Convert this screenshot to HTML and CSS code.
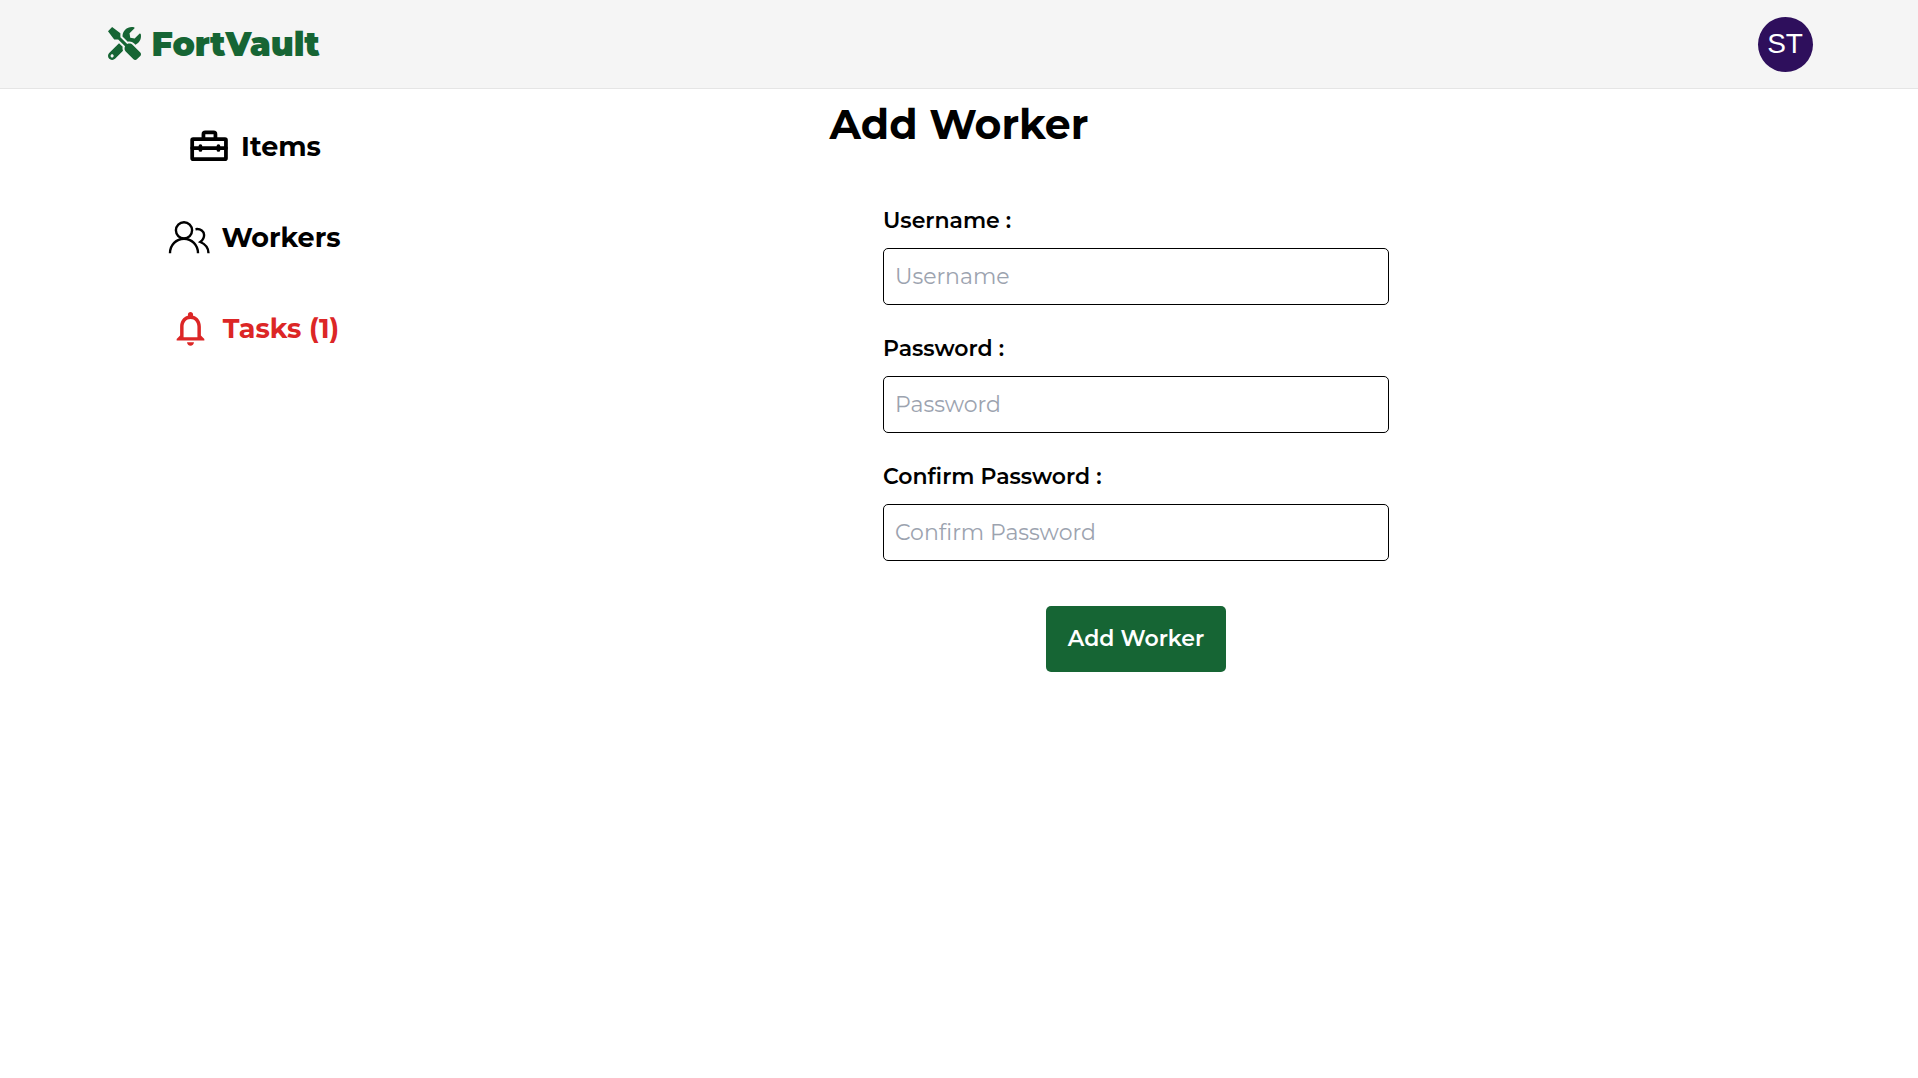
FILE: index.html
```html
<!DOCTYPE html>
<html lang="en">
<head>
<meta charset="utf-8">
<meta name="viewport" content="width=device-width, initial-scale=1">
<title>FortVault</title>
<link rel="stylesheet" href="styles.css">
</head>
<body>
<header class="topbar">
  <a class="brand" href="#">
    <svg class="brand-icon" viewBox="0 0 512 512" aria-hidden="true"><path fill="currentColor" d="M501.100 395.700L384 278.600c-23.100-23.100-57.600-27.600-85.400-13.900L192 158.100V96L64 0 0 64l96 128h62.100l106.600 106.600c-13.600 27.800-9.200 62.300 13.900 85.400l117.100 117.100c14.600 14.600 38.200 14.600 52.700 0l52.700-52.700c14.500-14.600 14.500-38.200 0-52.700zM331.700 225c28.300 0 54.900 11 74.900 31l19.400 19.400c15.800-6.900 30.800-16.500 43.800-29.500 37.100-37.100 49.700-89.300 37.900-136.700-2.200-9-13.500-12.100-20.100-5.500l-74.400 74.400-67.900-11.300L334 98.900l74.400-74.400c6.600-6.600 3.400-17.900-5.700-20.200-47.400-11.700-99.600.900-136.600 37.900-28.500 28.500-41.900 66.100-41.200 103.600l82.100 82.100c8.100-1.900 16.500-2.900 24.700-2.900zm-103.900 82l-56.700-56.700L18.700 402.800c-25 25-25 65.500 0 90.500s65.500 25 90.500 0l123.600-123.600c-7.600-19.900-9.900-41.600-5-62.700zM64 472c-13.200 0-24-10.800-24-24 0-13.300 10.700-24 24-24s24 10.700 24 24c0 13.200-10.700 24-24 24z"/></svg>
    <span>FortVault</span>
  </a>
  <button class="avatar" type="button" aria-label="Account ST">ST</button>
</header>
<div class="page">
  <nav class="sidebar">
    <a class="nav-link" href="#">
      <svg class="nav-icon" viewBox="0 0 24 24" aria-hidden="true" fill="none" stroke="currentColor" stroke-width="2" stroke-linejoin="round" stroke-linecap="round"><rect x="3.300" y="8" width="18" height="10.700" rx=".5"/><path d="M9.300 8V5.500a1 1 0 0 1 1-1h4.400a1 1 0 0 1 1 1V8M3.300 12.800h18" /><path d="M7.700 11.800v2M17.300 11.800v2"/></svg>
      <span>Items</span>
    </a>
    <a class="nav-link" href="#">
      <svg class="nav-icon" viewBox="0 0 45 45" aria-hidden="true" fill="none" stroke="currentColor" stroke-width="2.400"><circle cx="18" cy="15.300" r="8.100"/><path d="M4 38.200a14 14.500 0 0 1 28 0M29.500 14.200c5.200-.8 8.600 2.200 8.600 5.800 0 3-1.300 5.200-3.800 7 4.800 2 8.200 5.700 8.200 11.200"/></svg>
      <span>Workers</span>
    </a>
    <a class="nav-link nav-link-alert" href="#">
      <svg class="nav-icon" viewBox="-1 -1 26 26" aria-hidden="true"><path fill="currentColor" d="M12 22c1.100 0 2-.9 2-2h-4c0 1.100.89 2 2 2zm6-6v-5c0-3.070-1.640-5.640-4.500-6.320V4c0-.83-.67-1.500-1.500-1.500s-1.500.67-1.500 1.500v.68C7.630 5.360 6 7.920 6 11v5l-2 2v1h16v-1l-2-2zm-2 1H8v-6c0-2.480 1.510-4.500 4-4.500s4 2.020 4 4.500v6z"/></svg>
      <span>Tasks (1)</span>
    </a>
  </nav>
  <h1 class="title">Add Worker</h1>
  <form class="worker-form">
    <div class="field"><label for="username">Username :</label><input id="username" type="text" placeholder="Username"></div>
    <div class="field"><label for="password">Password :</label><input id="password" type="password" placeholder="Password"></div>
    <div class="field"><label for="confirm">Confirm Password :</label><input id="confirm" type="password" placeholder="Confirm Password"></div>
    <button class="submit" type="submit">Add Worker</button>
  </form>
</div>
</body>
</html>
```

FILE: styles.css
```css
* { box-sizing: border-box; }
body { margin: 0; background: #fff; color: #000; font-family: Montserrat, Inter, "Open Sans", sans-serif; font-size: 22px; line-height: 32px; }
a { color: inherit; text-decoration: none; }
.topbar { display: flex; align-items: center; justify-content: space-between; padding: 17px 5.5vw 16px; background: #f5f5f5; border-bottom: 1px solid #e5e5e5; }
.brand { display: flex; align-items: center; gap: 10px; padding: 0 0 2px 3px; color: #166534; font-size: 33px; font-weight: 900; }
.brand-icon { width: 33px; height: 33px; }
.avatar { width: 55px; height: 55px; padding: 0 0 2px; border: 0; border-radius: 50%; background: #2e0f5c; color: #fff; font-family: "Liberation Sans", Arial, sans-serif; font-size: 28px; }
.page { display: grid; grid-template-columns: 354px 1fr; }
.sidebar { grid-column: 1; grid-row: 1 / 3; display: flex; flex-direction: column; align-items: center; gap: 46px; padding: 35px 0 0 153px; }
.nav-link { display: flex; align-items: center; gap: 10px; font-size: 27px; font-weight: 700; white-space: nowrap; }
.nav-link-alert { color: #dc2626; }
.nav-icon { width: 45px; height: 45px; flex: none; }
.title { grid-column: 1 / 3; grid-row: 1; justify-self: center; margin: 11px 0 57px; font-size: 41px; line-height: 48px; font-weight: 700; }
.worker-form { grid-column: 2; grid-row: 2; justify-self: center; width: 506px; max-width: 100%; display: flex; flex-direction: column; gap: 28px; }
.field { display: flex; flex-direction: column; gap: 11px; }
.field label { font-weight: 600; }
.field input { height: 57px; padding: 0 11px; border: 1px solid #000; border-radius: 5px; font: inherit; }
.field input::placeholder { color: #9ca3af; opacity: 1; }
.submit { align-self: center; margin-top: 17px; height: 66px; padding: 0 22px; border: 0; border-radius: 5px; background: #166534; color: #fff; font: inherit; font-weight: 600; }
```
